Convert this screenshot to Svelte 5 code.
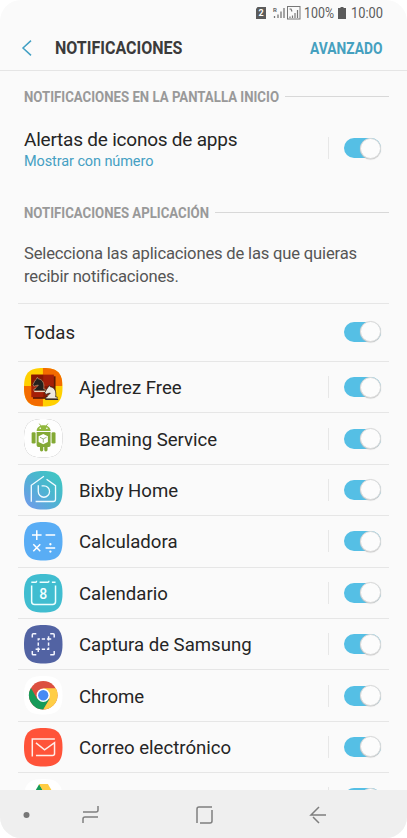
<script lang="ts">
    interface App {
        id: string;
        name: string;
    }

    let apps: App[] = [
        { id: 'chess', name: 'Ajedrez Free' },
        { id: 'beaming', name: 'Beaming Service' },
        { id: 'bixby', name: 'Bixby Home' },
        { id: 'calculator', name: 'Calculadora' },
        { id: 'calendar', name: 'Calendario' },
        { id: 'capture', name: 'Captura de Samsung' },
        { id: 'chrome', name: 'Chrome' },
        { id: 'mail', name: 'Correo electrónico' },
        { id: 'drive', name: '' }
    ];

    const fills: Record<string, string> = {
        chess: '#ffd000',
        beaming: '#fefefe',
        bixby: 'url(#bixby-bg)',
        calculator: '#59adf5',
        calendar: '#40bdd0',
        capture: '#5263a3',
        chrome: '#ffffff',
        mail: '#ff5339',
        drive: '#ffffff'
    };

    const squircle = 'M58 0C101 0 116 15 116 58S101 116 58 116 0 101 0 58 15 0 58 0Z';
    const knight = 'M4 44h36v-6h-5C38 20 32 8 18 6l-3-5-3 6C7 10 5 18 1 24l3 6 7-3 7-1C15 32 8 33 8 38H4Z';
</script>

{#snippet toggle()}
    <button class="toggle" role="switch" aria-checked="true" aria-label="Activar">
        <span class="knob"></span>
    </button>
{/snippet}

<div class="screen">
    <div class="status">
        <svg class="sim" viewBox="0 0 12 12">
            <path d="M2.5 0H11v12H1V2Z" fill="#5b5b5b" />
            <text x="6" y="9.4" text-anchor="middle" font-size="9" font-weight="700" fill="#fff">2</text>
        </svg>
        <svg class="signals" viewBox="0 0 28 14">
            <text x="0" y="5.5" font-size="6" font-weight="700" fill="#666">R</text>
            <path d="M1.5 12v-2M5 12V8.5M8 12V5.5M11 12V2" stroke="#777" stroke-width="1.3" />
            <rect x="14.5" y=".5" width="12.5" height="12.5" fill="none" stroke="#777" />
            <path d="M17 12v-1.5M19.5 12V9.5M22 12V7M24.5 12V4M16.5 3H18l1 2.5" fill="none" stroke="#777" stroke-width="1.2" />
        </svg>
        <svg class="percent" viewBox="0 0 30 18"><text x="0" y="14" textLength="30" lengthAdjust="spacingAndGlyphs">100%</text></svg>
        <svg class="battery" viewBox="0 0 8 12"><path d="M2.5 0h3v1H8v11H0V1h2.5Z" fill="#5b5b5b" /></svg>
        <svg class="clock" viewBox="0 0 33 18"><text x="0" y="14" textLength="32" lengthAdjust="spacingAndGlyphs">10:00</text></svg>
    </div>

    <header>
        <svg class="back" viewBox="0 0 10 16"><path d="M9 .6 1 8l8 7.4" fill="none" stroke="#42a0c4" stroke-width="1.5" /></svg>
        <svg class="title" viewBox="0 0 130 24"><text x="0" y="18" textLength="127.5" lengthAdjust="spacingAndGlyphs">NOTIFICACIONES</text></svg>
        <svg class="advanced" viewBox="0 0 73 24"><text x="0" y="18" textLength="72.5" lengthAdjust="spacingAndGlyphs">AVANZADO</text></svg>
    </header>

    <main>
        <div class="section">
            <svg width="256" height="20"><text x="0" y="15.6" textLength="255" lengthAdjust="spacingAndGlyphs">NOTIFICACIONES EN LA PANTALLA INICIO</text></svg>
            <span class="rule"></span>
        </div>

        <div class="alerts">
            <div class="alerts-text">
                <div class="alerts-title">Alertas de iconos de apps</div>
                <div class="alerts-sub">Mostrar con número</div>
            </div>
            <span class="divider"></span>
            {@render toggle()}
        </div>

        <div class="section second">
            <svg width="186" height="20"><text x="0" y="15.6" textLength="185" lengthAdjust="spacingAndGlyphs">NOTIFICACIONES APLICACIÓN</text></svg>
            <span class="rule"></span>
        </div>

        <p>Selecciona las aplicaciones de las que quieras<br />recibir notificaciones.</p>

        <div class="row all">
            <span class="name">Todas</span>
            {@render toggle()}
        </div>

        {#each apps as app}
            <div class="row">
                <svg class="icon" class:outlined={app.id === 'beaming'} viewBox="0 0 116 116">
                    <path d={squircle} fill={fills[app.id]} />
                    {#if app.id === 'chess'}
                        <clipPath id="chess-clip"><path d={squircle} /></clipPath>
                        <g clip-path="url(#chess-clip)">
                            <path d="M57 0h59v54H57ZM0 54h57v62H0Z" fill="#f36b00" />
                        </g>
                        <path d="M27 25h68v68H27Z" fill="#5d1a05" />
                        <path d="M22 20h68v68H22Z" fill="#a51f08" />
                        <path d="M22 20h36v34H22ZM58 54h32v34H58Z" fill="#861803" />
                        <path d={knight} transform="translate(26 27) scale(.95)" fill="#24201c" stroke="#c9a27c" stroke-width="2" />
                        <path d="M31 71h33" stroke="#eee0c8" stroke-width="3" />
                        <path d={knight} transform="translate(62 51) scale(.95)" fill="#eee8dc" stroke="#211a16" stroke-width="2" />
                        <path d="M64 95h39" stroke="#342a22" stroke-width="3" />
                    {:else if app.id === 'beaming'}
                        <path d="M46 14l6 8M72 14l-6 8" stroke="#8aae3a" stroke-width="2.5" />
                        <path d="M38 36c0-23 42-23 42 0Z" fill="#91b83d" />
                        <circle cx="49" cy="28" r="2.5" fill="#fff" /><circle cx="69" cy="28" r="2.5" fill="#fff" />
                        <path d="M38 39h42v40q0 5-5 5h-4v9q0 5-5 5t-5-5v-9h-3v9q0 5-5 5t-5-5v-9h-5q-5 0-5-5Z" fill="#83a934" />
                        <rect x="23" y="40" width="12" height="34" rx="4" fill="#83a934" />
                        <rect x="83" y="40" width="12" height="34" rx="4" fill="#83a934" />
                        <path d="m58 45 14 7v17l-14 7-14-7V52Z" fill="#fff" />
                        <path d="m48 55 10 5 10-5M58 60v11" fill="none" stroke="#89a85d" stroke-width="2.5" />
                    {:else if app.id === 'bixby'}
                        <linearGradient id="bixby-bg" x1="0" y1="1" x2="1" y2="0">
                            <stop offset="0" stop-color="#7598ed" />
                            <stop offset=".55" stop-color="#4bb5d0" />
                            <stop offset="1" stop-color="#3dcbbf" />
                        </linearGradient>
                        <g fill="none" stroke="#f1fbff" stroke-width="4">
                            <path d="M22 93V43L60 16M68 25l27 19v41q0 7-7 7H35" />
                            <path d="M43 43v19a17 17 0 1 0 17-17h-7" />
                        </g>
                    {:else if app.id === 'calculator'}
                        <path d="M24 39h29M38.5 25v29M65 39h29M28 67l21 21M49 67 28 88M65 78h29" stroke="#fff" stroke-width="4.5" />
                        <circle cx="79.5" cy="67" r="3.5" fill="#fff" /><circle cx="79.5" cy="89" r="3.5" fill="#fff" />
                    {:else if app.id === 'calendar'}
                        <path d="M22 25h13q3 0 3-5M47 25h25q3 0 3-5M84 25h11M23 35v48q0 9 9 9h54q9 0 9-9V35" fill="none" stroke="#edffff" stroke-width="4.5" />
                        <text x="58" y="74" text-anchor="middle" font-size="42" font-weight="500" fill="#f4ffff">8</text>
                    {:else if app.id === 'capture'}
                        <g fill="none" stroke="#f3f5ff" stroke-width="4.5">
                            <path d="M25 38V29q0-3 3-3h9M79 26h9q3 0 3 3v9M91 78v9q0 3-3 3h-9M37 90h-9q-3 0-3-3v-9" />
                            <path d="M43 42h31v31H43Z" stroke-dasharray="10 5.5" stroke-dashoffset="5" />
                            <path d="M35 73h8v8M74 34v8h8" />
                        </g>
                    {:else if app.id === 'chrome'}
                        <circle cx="58" cy="58" r="43" fill="#dc5040" />
                        <path d="M21 36A43 43 0 0 0 58 101L77 69 39 68Z" fill="#179b59" />
                        <path d="M58 101A43 43 0 0 0 96 37H58L77 69Z" fill="#ffce46" />
                        <circle cx="58" cy="58" r="20" fill="#fff" /><circle cx="58" cy="58" r="15.5" fill="#468af5" />
                    {:else if app.id === 'mail'}
                        <path d="M25 86V33h68M36 83h50q6 0 6-6V44L62 66 36 45" fill="none" stroke="#ffede8" stroke-width="4.5" />
                    {:else if app.id === 'drive'}
                        <path d="M46 15 18 64l13 20 28-47Z" fill="#159b58" />
                        <path d="M45 15h27l28 48H73Z" fill="#ffcc42" />
                        <path d="M45 63h55L87 84H31Z" fill="#4688f4" />
                    {/if}
                </svg>
                <span class="name">{app.name}</span>
                <span class="divider"></span>
                {@render toggle()}
            </div>
        {/each}
    </main>

    <nav>
        <svg viewBox="0 0 407 48" fill="none" stroke="#7f7f7f" stroke-width="1.5">
            <circle cx="26.5" cy="25" r="3" fill="#777" stroke="none" />
            <path d="M83 22h13q2 0 2-2v-4M98 27H85q-2 0-2 2v4" />
            <path d="M197 33V19q0-2 2-2h13M212 20v11q0 2-2 2h-10" />
            <path d="M326 25h-15l8-8M313 27l6 6" />
        </svg>
    </nav>
</div>

<style>
    :global(body) {
        margin: 0;
        background: #fff;
    }

    .screen {
        display: flex;
        flex-direction: column;
        width: 407px;
        height: 838px;
        overflow: hidden;
        border-radius: 21px;
        background: #fafafa;
        color: #252525;
        font-family: Roboto, sans-serif;
    }

    svg {
        display: block;
        flex: none;
        overflow: visible;
    }

    .status {
        display: flex;
        align-items: center;
        height: 26px;
        flex: none;
        padding-left: 255px;
        font-size: 14.5px;
        fill: #5c5c5c;
    }

    .sim { width: 12px; height: 12px; }
    .signals { width: 28px; height: 14px; margin-left: 6px; }
    .percent { width: 30px; height: 18px; margin-left: 3px; }
    .battery { width: 8px; height: 12px; margin-left: 4px; }
    .clock { width: 33px; height: 18px; margin-left: 4.5px; }

    header {
        display: flex;
        align-items: center;
        box-sizing: border-box;
        height: 45px;
        flex: none;
        padding: 0 24px 0 22px;
        border-bottom: 1px solid #e5e5e5;
        font-weight: 700;
    }

    .back { width: 10px; height: 16px; }
    .title { width: 130px; height: 24px; margin-left: 23px; font-size: 18px; fill: #3b3b3b; }
    .advanced { width: 73px; height: 24px; margin-left: auto; font-size: 16px; fill: #45a0bf; }

    main {
        flex: 1;
        min-height: 0;
        overflow: hidden;
        padding: 16px 18px 0;
    }

    .section {
        display: flex;
        align-items: center;
        height: 18px;
        padding-left: 6px;
        font-size: 15px;
        font-weight: 700;
        fill: #999;
    }

    .rule {
        flex: 1;
        height: 1px;
        margin-left: 5px;
        background: #d8d8d8;
    }

    .alerts {
        display: flex;
        align-items: center;
        height: 86px;
        padding: 0 8px 0 6px;
    }

    .alerts-text { flex: 1; padding-top: 3px; }
    .alerts-title { font-size: 19px; line-height: 24px; letter-spacing: -0.22px; }
    .alerts-sub { font-size: 14.5px; line-height: 20px; letter-spacing: -0.1px; color: #45a0c3; }
    .second { margin-top: 12px; }

    p {
        margin: 20.5px 0 0 6px;
        font-size: 16.6px;
        line-height: 23.5px;
        letter-spacing: -0.18px;
        color: #555;
    }

    .row {
        display: flex;
        align-items: center;
        box-sizing: border-box;
        height: 51.4px;
        padding: 0 8px 0 6px;
        border-top: 1px solid #e6e6e6;
    }

    .all {
        height: 58px;
        margin-top: 14.5px;
        padding-bottom: 2px;
    }

    .icon {
        width: 38.5px;
        height: 38.5px;
        margin-right: 16.5px;
    }

    .outlined {
        filter: drop-shadow(0 0 0.7px #999);
    }

    .name {
        flex: 1;
        padding-top: 2px;
        font-size: 18.6px;
        line-height: 24px;
    }

    .divider {
        width: 1px;
        height: 22px;
        margin-right: 15px;
        background: #e7e7e7;
    }

    .toggle {
        display: flex;
        justify-content: flex-end;
        align-items: center;
        width: 37px;
        height: 20px;
        padding: 0;
        border: none;
        border-radius: 10px;
        background: #55bfe5;
    }

    .knob {
        flex: none;
        box-sizing: border-box;
        width: 21px;
        height: 21px;
        border: 1px solid #dadada;
        border-radius: 50%;
        background: #fcfcfc;
        box-shadow: 0 0.5px 1px #c4c4c4;
    }

    nav {
        height: 48px;
        flex: none;
        background: #efefef;
    }
</style>
